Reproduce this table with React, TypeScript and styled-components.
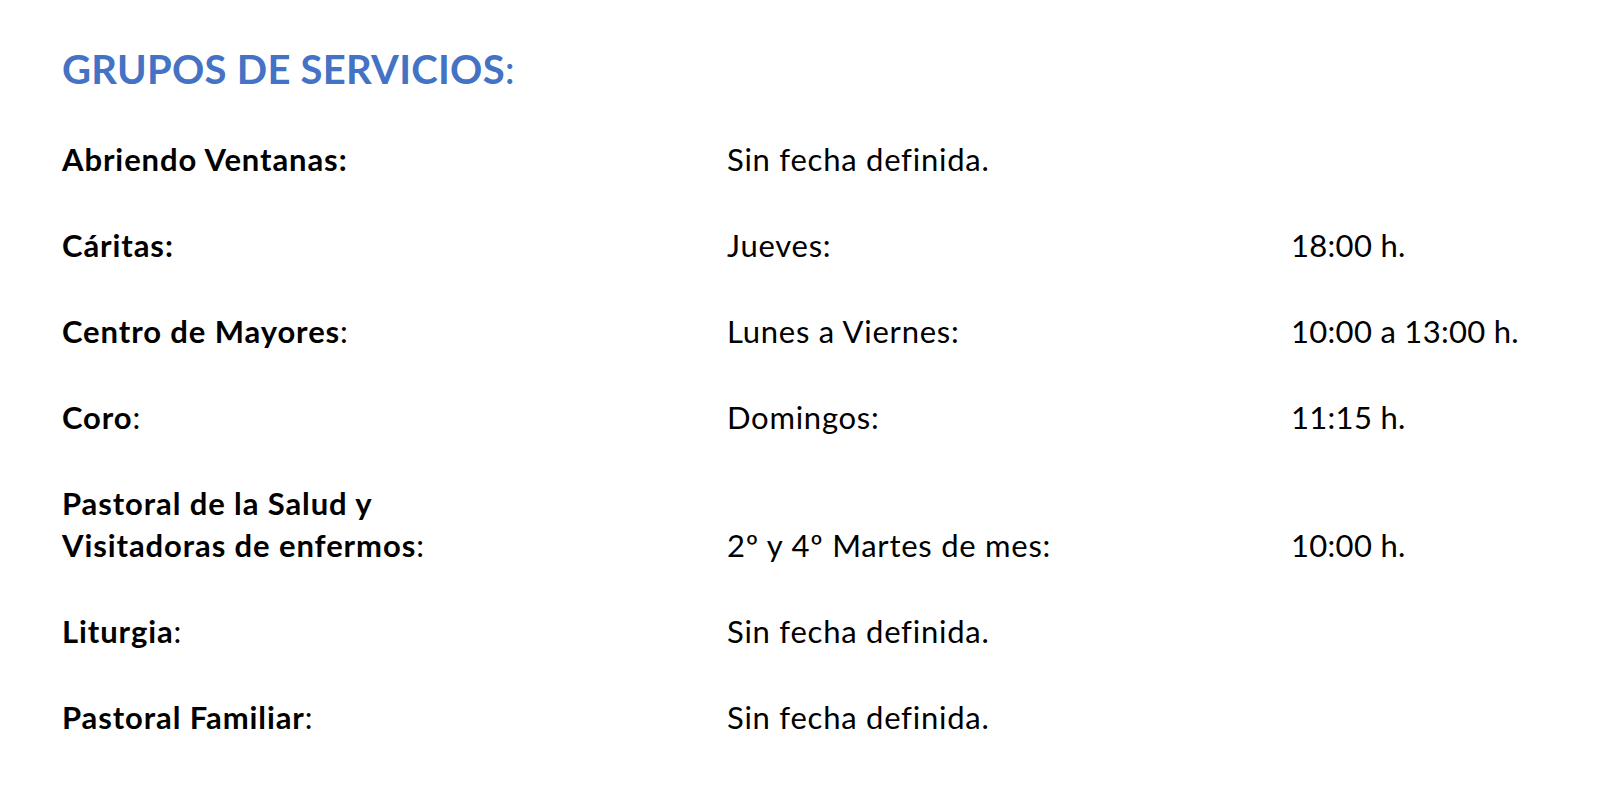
import React from 'react';
import styled, { createGlobalStyle } from 'styled-components';

const GlobalStyle = createGlobalStyle`
  html, body {
    margin: 0;
    padding: 0;
    background: #ffffff;
  }
  body {
    font-family: Lato, 'Open Sans', sans-serif;
    color: #000000;
  }
`;

const Page = styled.div`
  padding: 46px 0 0 62px;
`;

const Title = styled.h1`
  margin: 0 0 45px 0;
  font-size: 40px;
  line-height: 47px;
  font-weight: 700;
  color: #4472c4;
  letter-spacing: 0.25px;
`;

const TitleColon = styled.span`
  font-weight: 400;
`;

const Schedule = styled.div`
  display: flex;
  flex-direction: column;
  gap: 44px;
`;

const Row = styled.div`
  display: grid;
  grid-template-columns: 665px 564px 1fr;
  align-items: end;
  font-size: 31px;
  line-height: 42px;
  letter-spacing: 0.75px;
`;

const Label = styled.div`
  font-weight: 700;
  letter-spacing: 0.9px;
`;

const Colon = styled.span<{ $bold: boolean }>`
  font-weight: ${(p) => (p.$bold ? 700 : 400)};
`;

const Cell = styled.div<{ $tight?: boolean }>`
  font-weight: 400;
  letter-spacing: ${(p) => (p.$tight ? '0.3px' : '0.75px')};
`;

type Group = {
  name: string[];
  boldColon: boolean;
  when: string;
  time?: string;
};

const groups: Group[] = [
  { name: ['Abriendo Ventanas'], boldColon: true, when: 'Sin fecha definida.' },
  { name: ['Cáritas'], boldColon: true, when: 'Jueves:', time: '18:00 h.' },
  {
    name: ['Centro de Mayores'],
    boldColon: false,
    when: 'Lunes a Viernes:',
    time: '10:00 a 13:00 h.',
  },
  { name: ['Coro'], boldColon: false, when: 'Domingos:', time: '11:15 h.' },
  {
    name: ['Pastoral de la Salud y', 'Visitadoras de enfermos'],
    boldColon: false,
    when: '2º y 4º Martes de mes:',
    time: '10:00 h.',
  },
  { name: ['Liturgia'], boldColon: false, when: 'Sin fecha definida.' },
  { name: ['Pastoral Familiar'], boldColon: false, when: 'Sin fecha definida.' },
];

const App: React.FC = () => (
  <>
    <GlobalStyle />
    <Page>
      <Title>
        GRUPOS DE SERVICIOS<TitleColon>:</TitleColon>
      </Title>
      <Schedule>
        {groups.map((g) => (
          <Row key={g.name.join(' ')}>
            <Label>
              {g.name.map((line, i) => (
                <div key={line}>
                  {line}
                  {i === g.name.length - 1 && <Colon $bold={g.boldColon}>:</Colon>}
                </div>
              ))}
            </Label>
            <Cell>{g.when}</Cell>
            <Cell $tight>{g.time}</Cell>
          </Row>
        ))}
      </Schedule>
    </Page>
  </>
);

export default App;
